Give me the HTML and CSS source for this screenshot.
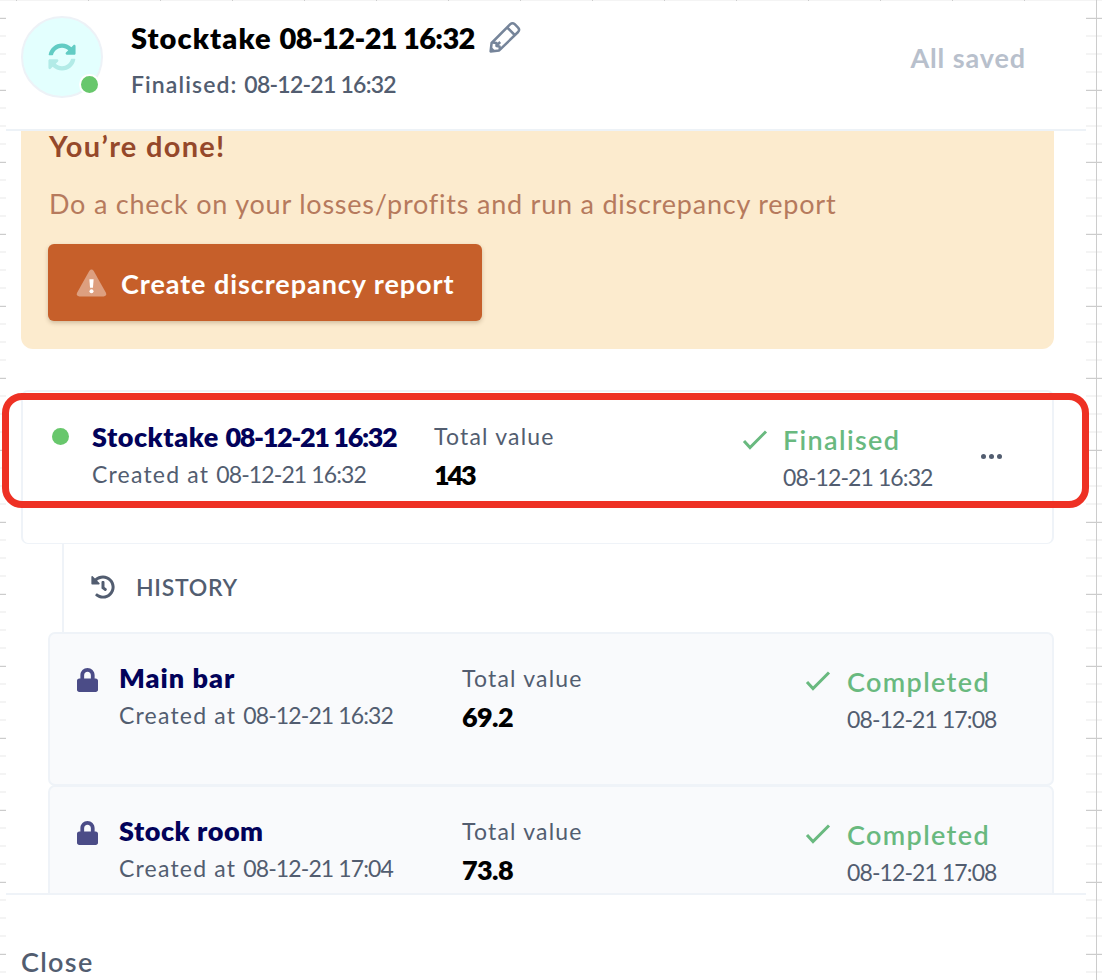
FILE: index.html
```html
<!DOCTYPE html>
<html lang="en">
    <head>
        <meta charset="utf-8">
        <title>Stocktake</title>
        <link rel="stylesheet" href="styles.css">
    </head>
    <body>
        <!-- shared icons -->
        <svg class="sprite">
            <symbol id="check" viewBox="0 0 26 22">
                <path d="M2 12l6 6.5L24 2.5" fill="none" stroke="currentColor" stroke-width="3"/>
            </symbol>
            <symbol id="lock" viewBox="0 0 448 512">
                <path fill="currentColor" d="M400 224h-24v-72C376 68.2 307.8 0 224 0S72 68.2 72 152v72H48c-26.5 0-48 21.5-48 48v192c0 26.5 21.5 48 48 48h352c26.5 0 48-21.5 48-48V272c0-26.5-21.5-48-48-48zm-104 0H152v-72c0-39.7 32.3-72 72-72s72 32.3 72 72v72z"/>
            </symbol>
        </svg>
        <div class="panel">
            <header class="header">
                <div class="avatar">
                    <svg class="sync" viewBox="0 0 512 512">
                        <path fill="#62ccc4" d="M370.72 133.28C339.458 104.008 298.888 87.962 255.848 88c-77.458.068-144.328 53.178-162.791 126.85-1.344 5.363-6.122 9.15-11.651 9.15H24.103c-7.498 0-13.194-6.807-11.807-14.176C33.933 94.924 134.813 8 256 8c66.448 0 126.791 26.136 171.315 68.685L463.03 40.97C478.149 25.851 504 36.559 504 57.941V192c0 13.255-10.745 24-24 24H345.941c-21.382 0-32.09-25.851-16.971-40.971l41.75-41.749z"/>
                        <path fill="#b2ebe7" d="M32 296h134.059c21.382 0 32.09 25.851 16.971 40.971l-41.75 41.75c31.262 29.273 71.835 45.319 114.876 45.28 77.418-.07 144.315-53.144 162.787-126.849 1.344-5.363 6.122-9.15 11.651-9.15h57.304c7.498 0 13.194 6.807 11.807 14.176C478.067 417.076 377.187 504 256 504c-66.448 0-126.791-26.136-171.315-68.685L48.97 471.03C33.851 486.149 8 475.441 8 454.059V320c0-13.255 10.745-24 24-24z"/>
                    </svg>
                    <span class="badge"></span>
                </div>
                <div class="heading">
                    <h1 class="title">Stocktake <time>08-12-21 16:32</time>
                        <svg class="pencil" viewBox="0 0 32 32" fill="none" stroke="#76859a" stroke-width="2.5" stroke-linejoin="round">
                            <path d="M1.6 30.4l1-8.4L21.3 3.2q2.2-2 4.4 0l3.4 3.4q2 2.2 0 4.4L10.2 29.4z"/>
                            <path d="M18.2 6.500l7.500 7.500M3.500 21.500l4 .5v3l3 .5.5 3.500M7.600 24.600l3.600-3.600"/>
                            <path d="M1.500 30.500l.5-5 4.500 4.500z" fill="#76859a" stroke="none"/>
                        </svg>
                    </h1>
                    <p class="subtitle">Finalised: <time>08-12-21 16:32</time></p>
                </div>
                <span class="saved">All saved</span>
            </header>
            <main class="content">
                <section class="banner">
                    <h2 class="banner-title">You’re done!</h2>
                    <p class="banner-text">Do a check on your losses/profits and run a discrepancy report</p>
                    <button class="report">
                        <svg class="warning" viewBox="0 0 32 28">
                            <path d="M13.700 1.500q2.300-3 4.600 0l12.600 22.500q1.200 3.500-2.400 4h-25q-3.600-.5-2.400-4z" fill="#fff" fill-opacity=".4"/>
                            <path d="M13.800 10h4.400l-.7 9h-3z" fill="#fff"/>
                            <circle cx="16" cy="22.500" r="2.100" fill="#fff"/>
                        </svg>
                        Create discrepancy report
                    </button>
                </section>
                <section class="card current">
                    <span class="dot"></span>
                    <div class="info">
                        <h3 class="name">Stocktake <time>08-12-21 16:32</time></h3>
                        <p class="small">Created at <time>08-12-21 16:32</time></p>
                    </div>
                    <div class="total">
                        <p class="small">Total value</p>
                        <p class="value tight">143</p>
                    </div>
                    <svg class="check"><use href="#check"/></svg>
                    <div class="status">
                        <p class="state">Finalised</p>
                        <p class="small"><time>08-12-21 16:32</time></p>
                    </div>
                    <span class="more"><i></i><i></i><i></i></span>
                </section>
                <div class="history">
                    <svg class="clock" viewBox="0 0 512 512">
                        <path fill="currentColor" d="M504 255.531c.253 136.640-111.180 248.372-247.820 248.468-59.015.042-113.223-20.530-155.822-54.911-11.077-8.940-11.905-25.541-1.839-35.607l11.267-11.267c8.609-8.609 22.353-9.551 31.891-1.984C173.062 425.135 212.781 440 256 440c101.705 0 184-82.311 184-184 0-101.705-82.311-184-184-184-48.814 0-93.149 18.969-126.068 49.932l50.754 50.754c10.080 10.080 2.941 27.314-11.313 27.314H24c-8.837 0-16-7.163-16-16V38.627c0-14.254 17.234-21.393 27.314-11.314l49.372 49.372C129.209 34.136 189.552 8 256 8c136.810 0 247.747 110.780 248 247.531zm-180.912 78.784l9.823-12.630c8.138-10.463 6.253-25.542-4.210-33.679L288 256.349V152c0-13.255-10.745-24-24-24h-16c-13.255 0-24 10.745-24 24v135.651l65.409 50.874c10.463 8.137 25.541 6.253 33.679-4.210z"/>
                    </svg>
                    <span>HISTORY</span>
                </div>
                <section class="card entry">
                    <svg class="lock"><use href="#lock"/></svg>
                    <div class="info">
                        <h3 class="name wide">Main bar</h3>
                        <p class="small">Created at <time>08-12-21 16:32</time></p>
                    </div>
                    <div class="total">
                        <p class="small">Total value</p>
                        <p class="value">69.2</p>
                    </div>
                    <svg class="check"><use href="#check"/></svg>
                    <div class="status">
                        <p class="state">Completed</p>
                        <p class="small"><time>08-12-21 17:08</time></p>
                    </div>
                </section>
                <section class="card entry">
                    <svg class="lock"><use href="#lock"/></svg>
                    <div class="info">
                        <h3 class="name">Stock room</h3>
                        <p class="small">Created at <time>08-12-21 17:04</time></p>
                    </div>
                    <div class="total">
                        <p class="small">Total value</p>
                        <p class="value">73.8</p>
                    </div>
                    <svg class="check"><use href="#check"/></svg>
                    <div class="status">
                        <p class="state">Completed</p>
                        <p class="small"><time>08-12-21 17:08</time></p>
                    </div>
                </section>
            </main>
            <footer class="footer">
                <button class="close">Close</button>
            </footer>
            <div class="highlight"></div>
        </div>
    </body>
</html>
```
FILE: styles.css
```css
*{
    margin: 0;
    padding: 0;
    box-sizing: border-box;
}
/* ruled sheet behind the panel */
body{
    height: 980px;
    overflow: hidden;
    padding: 1px 16px 0 6px;
    font-family: Lato, "Liberation Sans", sans-serif;
    color: #525d70;
    background-color: #fff;
    background-image:
        linear-gradient(90deg, #ccc 1px, transparent 1px),
        linear-gradient(#ccc 1px, transparent 1px),
        linear-gradient(#f4f4f4 2px, transparent 2px);
    background-size: 72px 100%, 100% 72px, 100% 18px;
    background-position: 16px 0, 0 18px, 0 17px;
}
button{
    border: 0;
    font-family: inherit;
    background: none;
}
.sprite{
    position: absolute;
    width: 0;
    height: 0;
}
.panel{
    position: relative;
    display: flex;
    flex-direction: column;
    width: 1080px;
    height: 979px;
    background: #fff;
}
.header{
    display: flex;
    flex: none;
    align-items: flex-start;
    height: 130px;
    padding: 15px 60px 0 15px;
    border-bottom: 2px solid #edf2f7;
}
.avatar{
    position: relative;
    display: flex;
    align-items: center;
    justify-content: center;
    width: 82px;
    height: 82px;
    border: 2px solid #edf2f7;
    border-radius: 50%;
    background: #e3fffe;
}
.sync{
    width: 28px;
    height: 28px;
}
.badge{
    position: absolute;
    right: 1px;
    bottom: 1px;
    width: 21px;
    height: 21px;
    border: 2px solid #fff;
    border-radius: 50%;
    background: #68c76c;
}
.heading{
    flex: 1;
    padding: 4px 0 0 28px;
}
.title{
    display: flex;
    align-items: center;
    height: 36px;
    font-size: 29px;
    font-weight: 800;
    line-height: 36px;
    letter-spacing: 1.1px;
    color: #000;
    white-space: pre;
}
.title time{
    letter-spacing: -.65px;
}
.pencil{
    width: 32px;
    height: 32px;
    margin: 0 0 3px 14px;
}
.subtitle{
    margin-top: 13px;
    font-size: 23px;
    font-weight: 600;
    line-height: 30px;
    letter-spacing: 1.1px;
}
.subtitle time{
    letter-spacing: -.75px;
}
.saved{
    margin-top: 24px;
    font-size: 27px;
    font-weight: 700;
    line-height: 36px;
    letter-spacing: .9px;
    color: #b8c0cc;
}
.content{
    flex: none;
    height: 762px;
    padding: 0 32px 0 15px;
    overflow: hidden;
}
.banner{
    height: 218px;
    padding-left: 28px;
    border-radius: 0 0 12px 12px;
    background: #fcebce;
}
.banner-title{
    height: 28px;
    font-size: 29px;
    line-height: 29px;
    letter-spacing: 1.3px;
    color: #95482a;
}
.banner-text{
    margin-top: 29px;
    font-size: 27px;
    line-height: 32px;
    letter-spacing: .78px;
    color: #b67a5d;
}
.report{
    display: flex;
    align-items: center;
    width: 434px;
    height: 77px;
    margin: 24px 0 0 -1px;
    padding: 2px 0 0 28px;
    border-radius: 6px;
    font-size: 27px;
    font-weight: 700;
    letter-spacing: .94px;
    color: #fff;
    background: #c65f2a;
    box-shadow: 0 2px 4px rgba(80, 50, 20, .25);
    white-space: nowrap;
}
.warning{
    width: 31px;
    height: 28px;
    margin: 0 14px 2px 0;
}
.card{
    display: grid;
    align-items: start;
    border: 2px solid #eff3f8;
    border-radius: 7px;
}
.current{
    grid-template-columns: 40px 342px 308px 41px 198px auto;
    height: 154px;
    margin-top: 41px;
    padding: 26px 0 0 29px;
    border-bottom-width: 1px;
}
.current .total{
    padding-top: 0;
}
.dot{
    width: 17px;
    height: 17px;
    margin-top: 10px;
    border-radius: 50%;
    background: #68c76c;
}
.name{
    font-size: 27px;
    font-weight: 800;
    line-height: 38px;
    letter-spacing: .55px;
    color: #02025a;
}
.wide{
    letter-spacing: 1px;
}
.name time{
    letter-spacing: -1.4px;
}
.small{
    font-size: 23px;
    line-height: 36px;
    letter-spacing: 1.2px;
}
.small time{
    letter-spacing: -.9px;
}
.total{
    padding-top: 1px;
}
.value{
    margin-top: 1px;
    font-size: 27px;
    font-weight: 800;
    line-height: 40px;
    letter-spacing: -.6px;
    color: #000;
}
.tight{
    letter-spacing: -2.2px;
}
.check{
    width: 26px;
    height: 22px;
    margin-top: 11px;
    color: #69b97f;
}
.status{
    padding-top: 3px;
}
.state{
    font-size: 27px;
    font-weight: 600;
    line-height: 38px;
    letter-spacing: 1.35px;
    color: #69b97f;
}
.more{
    display: flex;
    gap: 3px;
    margin-top: 36px;
}
.more i{
    width: 5px;
    height: 5px;
    border-radius: 50%;
    background: #525d70;
}
/* red frame drawn over the current stocktake */
.highlight{
    position: absolute;
    top: 392px;
    left: -4px;
    width: 1087px;
    height: 115px;
    border: 7px solid #ee3124;
    border-radius: 20px;
}
.history{
    display: flex;
    align-items: center;
    height: 88px;
    margin-left: 41px;
    padding: 0 0 2px 27px;
    border-left: 2px solid #eff3f8;
    font-size: 23px;
    font-weight: 600;
    letter-spacing: .7px;
}
.clock{
    width: 24px;
    height: 24px;
    margin-right: 21px;
}
.entry{
    grid-template-columns: 42px 343px 343px 42px auto;
    height: 154px;
    margin-left: 27px;
    padding: 25px 0 0 27px;
    background: #f9fafc;
}
.entry .status{
    padding-top: 4px;
}
.entry + .entry{
    margin-top: -1px;
}
.lock{
    width: 21px;
    height: 24px;
    margin-top: 9px;
    color: #4b4c87;
}
.footer{
    flex: 1;
    padding: 49px 0 0 15px;
    border-top: 2px solid #eff3f8;
    background: #fff;
}
.close{
    font-size: 27px;
    font-weight: 600;
    line-height: 36px;
    letter-spacing: 1.3px;
    color: #525d70;
}
```
